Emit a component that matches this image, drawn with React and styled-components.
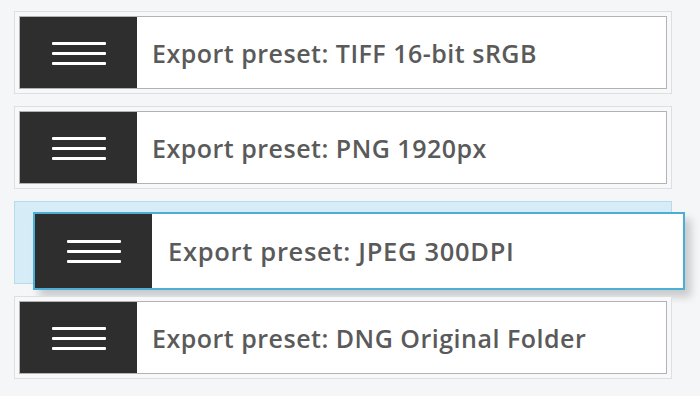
import React from "react";
import styled, { createGlobalStyle } from "styled-components";

const Global = createGlobalStyle`
  html, body { margin: 0; padding: 0; background: #f5f6f8; }
  body { font-family: "Open Sans", "Noto Sans", sans-serif; }
`;

const List = styled.div`
  display: flex;
  flex-direction: column;
  gap: 12px;
  padding: 11px 0 0 14px;
  width: 658px;
`;

const Slot = styled.div`
  position: relative;
  box-sizing: border-box;
  height: 83px;
  padding: 4px;
  border: 1px solid ${(p) => (p.$placeholder ? "#b6dcec" : "#dddfe2")};
  background: ${(p) => (p.$placeholder ? "#d6edf7" : "#f7f8fa")};
`;

const Item = styled.div`
  box-sizing: border-box;
  display: flex;
  align-items: stretch;
  height: 73px;
  border: 1px solid #b3b3b3;
  background: #fff;
`;

const DragItem = styled(Item)`
  position: absolute;
  left: 18px;
  top: 10px;
  width: 652px;
  height: 78px;
  border: 2px solid #4aaed6;
  box-shadow: 6px 7px 8px rgba(0, 0, 0, 0.18);
`;

const Handle = styled.div`
  flex: 0 0 117px;
  display: flex;
  align-items: center;
  justify-content: center;
  background: #2e2e2e;
`;

const Label = styled.div`
  display: flex;
  align-items: center;
  padding-left: ${(p) => (p.$drag ? 16 : 15)}px;
  font-size: ${(p) => (p.$drag ? 25.5 : 25)}px;
  font-weight: 600;
  color: #5a5a5a;
  letter-spacing: ${(p) => (p.$drag ? 0.7 : 0.5)}px;
  white-space: nowrap;
`;

const Burger = () => (
  <svg width="56" height="26" viewBox="0 0 56 26">
    <g fill="#fff">
      <rect x="1" y="2" width="54" height="3" rx="1" />
      <rect x="1" y="12" width="54" height="3" rx="1" />
      <rect x="1" y="22" width="54" height="3" rx="1" />
    </g>
  </svg>
);

const Row = ({ text }) => (
  <Item>
    <Handle>
      <Burger />
    </Handle>
    <Label>{text}</Label>
  </Item>
);

export default function App() {
  return (
    <>
      <Global />
      <List>
        <Slot>
          <Row text="Export preset: TIFF 16-bit sRGB" />
        </Slot>
        <Slot>
          <Row text="Export preset: PNG 1920px" />
        </Slot>
        <Slot $placeholder>
          <DragItem>
            <Handle>
              <Burger />
            </Handle>
            <Label $drag>Export preset: JPEG 300DPI</Label>
          </DragItem>
        </Slot>
        <Slot>
          <Row text="Export preset: DNG Original Folder" />
        </Slot>
      </List>
    </>
  );
}
